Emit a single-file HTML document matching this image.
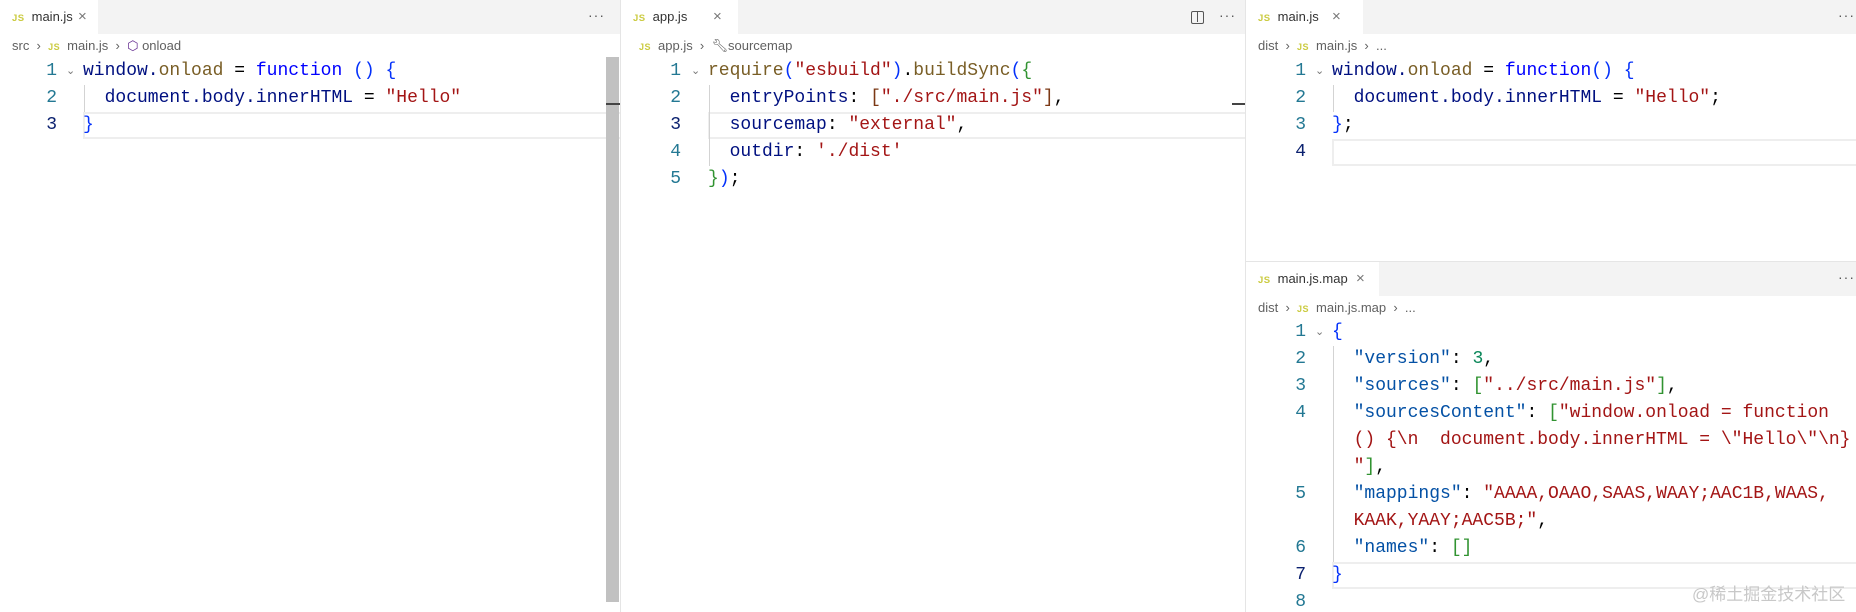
<!DOCTYPE html>
<html><head><meta charset="utf-8"><style>
*{margin:0;padding:0;box-sizing:border-box}
body{width:1856px;height:612px;background:#fff;position:relative;overflow:hidden;font-family:"Liberation Sans",sans-serif}
.pane{position:absolute;background:#fff;overflow:hidden}
.tabbar{position:absolute;left:0;top:0;right:0;height:34px;background:#f3f3f3}
.tab{position:absolute;left:0;top:0;height:34px;background:#fff;font-size:13px;color:#333;line-height:34px;padding-left:12px}
.js{color:#cbcb41;font-weight:bold;font-size:9.5px;margin-right:7px;letter-spacing:0.5px}
.x{position:absolute;top:0;font-size:15px;color:#777}
.dots{position:absolute;top:0;line-height:30px;font-size:14px;color:#555;letter-spacing:1px}
.bc{position:absolute;left:12px;top:37px;font-size:13px;color:#616161;height:18px;line-height:18px;white-space:nowrap}
.bc .js{font-size:9px}
.ln{position:absolute;height:27px;line-height:27px;font-family:"Liberation Mono",monospace;font-size:18px;color:#237893;text-align:right;width:40px}
.ln.a{color:#0b216f}
.code{position:absolute;height:27px;line-height:27px;font-family:"Liberation Mono",monospace;font-size:18px;white-space:pre;color:#001080}
.chev{position:absolute;font-size:11px;color:#777;height:27px;line-height:27px}
.cur{position:absolute;height:27px;border:2px solid #eeeeee;right:0}
.guide{position:absolute;width:1px;background:#d3d3d3}
.k{color:#0000ff}.f{color:#795e26}.s{color:#a31515}.n{color:#098658}.b1{color:#0431fa}.b2{color:#319331}.b3{color:#7b3814}.p{color:#000}
</style></head><body>

<!-- LEFT PANE -->
<div class="pane" style="left:0;top:0;width:620px;height:612px">
  <div class="tabbar"></div>
  <div class="tab" style="width:98px"><span class="js">JS</span>main.js<span class="x" style="left:78px">×</span></div>
  <div class="dots" style="left:588px">···</div>
  <div class="bc">src &nbsp;›&nbsp; <span class="js">JS</span>main.js &nbsp;›&nbsp; <span style="color:#652d90">⬡</span> onload</div>
  <div class="cur" style="left:83px;top:112px;width:540px"></div>
  <div class="guide" style="left:84px;top:85px;height:27px"></div>
  <div class="ln" style="left:17px;top:58px">1</div>
  <div class="chev" style="left:66px;top:58px">⌄</div>
  <div class="code" style="left:83px;top:58px">window.<span class="f">onload</span> <span class="p">=</span> <span class="k">function</span> <span class="b1">()</span> <span class="b1">{</span></div>
  <div class="ln" style="left:17px;top:85px">2</div>
  <div class="code" style="left:83px;top:85px">  document.body.innerHTML <span class="p">=</span> <span class="s">"Hello"</span></div>
  <div class="ln a" style="left:17px;top:112px">3</div>
  <div class="code" style="left:83px;top:112px"><span class="b1">}</span></div>
  <div style="position:absolute;left:606px;top:57px;width:13px;height:545px;background:#c1c1c1"></div>
  <div style="position:absolute;left:606px;top:103px;width:14px;height:2px;background:#444"></div>
</div>
<div style="position:absolute;left:620px;top:0;width:1px;height:612px;background:#e5e5e5"></div>

<!-- MIDDLE PANE -->
<div class="pane" style="left:621px;top:0;width:624px;height:612px">
  <div class="tabbar"></div>
  <div class="tab" style="width:117px"><span class="js">JS</span>app.js<span class="x" style="left:92px">×</span></div>
  <div style="position:absolute;left:570px;top:11px;width:13px;height:13px;border:1.5px solid #555;border-radius:2px"><div style="position:absolute;left:4.5px;top:0;width:1.5px;height:10px;background:#555"></div></div>
  <div class="dots" style="left:598px">···</div>
  <div class="bc" style="left:18px"><span class="js">JS</span>app.js &nbsp;›&nbsp; <span style="color:#555">🔧︎</span>sourcemap</div>
  <div class="cur" style="left:87px;top:112px;width:540px"></div>
  <div class="guide" style="left:88px;top:85px;height:81px"></div>
  <div class="ln" style="left:20px;top:58px">1</div>
  <div class="chev" style="left:70px;top:58px">⌄</div>
  <div class="code" style="left:87px;top:58px"><span class="f">require</span><span class="b1">(</span><span class="s">"esbuild"</span><span class="b1">)</span><span class="p">.</span><span class="f">buildSync</span><span class="b1">(</span><span class="b2">{</span></div>
  <div class="ln" style="left:20px;top:85px">2</div>
  <div class="code" style="left:87px;top:85px">  entryPoints<span class="p">:</span> <span class="b3">[</span><span class="s">"./src/main.js"</span><span class="b3">]</span><span class="p">,</span></div>
  <div class="ln a" style="left:20px;top:112px">3</div>
  <div class="code" style="left:87px;top:112px">  sourcemap<span class="p">:</span> <span class="s">"external"</span><span class="p">,</span></div>
  <div class="ln" style="left:20px;top:139px">4</div>
  <div class="code" style="left:87px;top:139px">  outdir<span class="p">:</span> <span class="s">'./dist'</span></div>
  <div class="ln" style="left:20px;top:166px">5</div>
  <div class="code" style="left:87px;top:166px"><span class="b2">}</span><span class="b1">)</span><span class="p">;</span></div>
  <div style="position:absolute;left:611px;top:103px;width:13px;height:2px;background:#444"></div>
</div>
<div style="position:absolute;left:1245px;top:0;width:1px;height:612px;background:#e5e5e5"></div>

<!-- RIGHT TOP -->
<div class="pane" style="left:1246px;top:0;width:610px;height:261px">
  <div class="tabbar"></div>
  <div class="tab" style="width:117px"><span class="js">JS</span>main.js<span class="x" style="left:86px">×</span></div>
  <div class="dots" style="left:592px">···</div>
  <div class="bc">dist &nbsp;›&nbsp; <span class="js">JS</span>main.js &nbsp;›&nbsp; ...</div>
  <div class="cur" style="left:86px;top:139px;width:530px"></div>
  <div class="guide" style="left:87px;top:85px;height:27px"></div>
  <div class="ln" style="left:20px;top:58px">1</div>
  <div class="chev" style="left:69px;top:58px">⌄</div>
  <div class="code" style="left:86px;top:58px">window.<span class="f">onload</span> <span class="p">=</span> <span class="k">function</span><span class="b1">()</span> <span class="b1">{</span></div>
  <div class="ln" style="left:20px;top:85px">2</div>
  <div class="code" style="left:86px;top:85px">  document.body.innerHTML <span class="p">=</span> <span class="s">"Hello"</span><span class="p">;</span></div>
  <div class="ln" style="left:20px;top:112px">3</div>
  <div class="code" style="left:86px;top:112px"><span class="b1">}</span><span class="p">;</span></div>
  <div class="ln a" style="left:20px;top:139px">4</div>
</div>
<div style="position:absolute;left:1246px;top:261px;width:610px;height:1px;background:#e5e5e5"></div>

<!-- RIGHT BOTTOM -->
<div class="pane" style="left:1246px;top:262px;width:610px;height:350px">
  <div class="tabbar"></div>
  <div class="tab" style="width:133px"><span class="js">JS</span>main.js.map<span class="x" style="left:110px">×</span></div>
  <div class="dots" style="left:592px">···</div>
  <div class="bc">dist &nbsp;›&nbsp; <span class="js">JS</span>main.js.map &nbsp;›&nbsp; ...</div>
  <div class="guide" style="left:87px;top:84px;height:216px"></div>
  <div class="ln" style="left:20px;top:57px">1</div>
  <div class="chev" style="left:69px;top:57px">⌄</div>
  <div class="code" style="left:86px;top:57px"><span class="b1">{</span></div>
  <div class="ln" style="left:20px;top:84px">2</div>
  <div class="code" style="left:86px;top:84px"><span style="color:#0451a5">  "version"</span><span class="p">:</span> <span class="n">3</span><span class="p">,</span></div>
  <div class="ln" style="left:20px;top:111px">3</div>
  <div class="code" style="left:86px;top:111px"><span style="color:#0451a5">  "sources"</span><span class="p">:</span> <span class="b2">[</span><span class="s">"../src/main.js"</span><span class="b2">]</span><span class="p">,</span></div>
  <div class="ln" style="left:20px;top:138px">4</div>
  <div class="code" style="left:86px;top:138px"><span style="color:#0451a5">  "sourcesContent"</span><span class="p">:</span> <span class="b2">[</span><span class="s">"window.onload = function</span></div>
  <div class="code" style="left:86px;top:165px"><span class="s">  () {\n  document.body.innerHTML = \"Hello\"\n}</span></div>
  <div class="code" style="left:86px;top:192px"><span class="s">  "</span><span class="b2">]</span><span class="p">,</span></div>
  <div class="ln" style="left:20px;top:219px">5</div>
  <div class="code" style="left:86px;top:219px"><span style="color:#0451a5">  "mappings"</span><span class="p">:</span> <span class="s">"AAAA,OAAO,SAAS,WAAY;AAC1B,WAAS,</span></div>
  <div class="code" style="left:86px;top:246px"><span class="s">  KAAK,YAAY;AAC5B;"</span><span class="p">,</span></div>
  <div class="ln" style="left:20px;top:273px">6</div>
  <div class="code" style="left:86px;top:273px"><span style="color:#0451a5">  "names"</span><span class="p">:</span> <span class="b2">[]</span></div>
  <div class="cur" style="left:86px;top:300px;width:530px"></div>
  <div class="ln a" style="left:20px;top:300px">7</div>
  <div class="code" style="left:86px;top:300px"><span class="b1">}</span></div>
  <div class="ln" style="left:20px;top:327px">8</div>
</div>
<div style="position:absolute;left:1692px;top:580px;white-space:nowrap;font-family:'Liberation Sans','Noto Sans CJK SC',sans-serif;font-size:17px;color:#c8c8c8">@稀土掘金技术社区</div>
</body></html>
